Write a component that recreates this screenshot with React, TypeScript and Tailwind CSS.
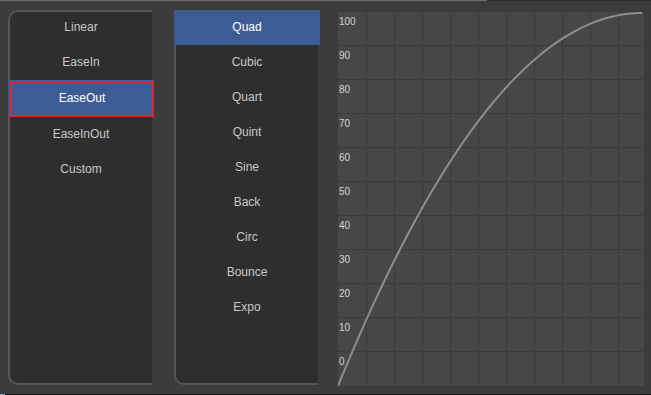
import React from "react";

const left = ["Linear", "EaseIn", "EaseOut", "EaseInOut", "Custom"];
const mid = ["Quad", "Cubic", "Quart", "Quint", "Sine", "Back", "Circ", "Bounce", "Expo"];
const labels = ["100", "90", "80", "70", "60", "50", "40", "30", "20", "10", "0"];

function Curve() {
  const W = 306;
  const H = 375;
  const pts: string[] = [];
  for (let i = 0; i <= 80; i++) {
    const t = i / 80;
    const v = 1 - (1 - t) * (1 - t);
    pts.push(`${(t * 304).toFixed(2)},${(375 - v * 373).toFixed(2)}`);
  }
  const vlines = [];
  for (let k = 1; k <= 10; k++) vlines.push(28 * k + 0.5);
  const hlines = [];
  for (let k = 0; k <= 10; k++) hlines.push(34 * k + 0.5);
  return (
    <svg width={W} height={H} className="absolute left-0 top-0">
      {vlines.map((x) => (
        <line key={"v" + x} x1={x} y1={0} x2={x} y2={H} stroke="#3b3b3b" strokeWidth={1} />
      ))}
      {hlines.map((y) => (
        <line key={"h" + y} x1={0} y1={y} x2={W} y2={y} stroke="#3b3b3b" strokeWidth={1} />
      ))}
      <polyline points={pts.join(" ")} fill="none" stroke="#8e8e8e" strokeWidth={2} />
    </svg>
  );
}

export default function App() {
  return (
    <div
      className="w-[651px] h-[395px] bg-[#3c3c3c] flex flex-col overflow-hidden"
      style={{ fontFamily: '"Liberation Sans", Arial, sans-serif' }}
    >
      <div className="flex h-[1px]">
        <div className="w-[487px] bg-[#6e6e6e]" />
        <div className="flex-1 bg-[#2a2a2a]" />
      </div>
      <div className="flex-1 flex pl-[8px] pt-[9px]">
        {/* left panel */}
        <div className="w-[144px] h-[375px] rounded-l-[10px] border-2 border-r-0 border-[#555555] bg-[#2e2e2e] flex flex-col">
          {left.map((l, i) =>
            l === "EaseOut" ? (
              <div key={l} className="-ml-[2px] w-[146px] h-[37px] shrink-0 bg-[#3d5c93] pl-[2px] pt-[1px] flex">
                <div className="flex-1 border-2 border-[#e02530] pb-[2px] flex items-center justify-center text-[12px] text-white">
                  {l}
                </div>
              </div>
            ) : (
              <div
                key={l}
                className={
                  i === 0
                    ? "-mt-[2px] h-[35px] shrink-0 pb-[2px] flex items-center justify-center text-[12px] text-[#c8c8c8]"
                    : "h-[35px] shrink-0 pb-[2px] flex items-center justify-center text-[12px] text-[#c8c8c8]"
                }
              >
                {l}
              </div>
            )
          )}
        </div>
        {/* middle panel */}
        <div className="ml-[22px] w-[144px] h-[375px] rounded-l-[10px] border-2 border-r-0 border-[#555555] bg-[#2e2e2e] flex flex-col">
          {mid.map((l, i) =>
            i === 0 ? (
              <div key={l} className="-ml-[2px] -mt-[2px] w-[146px] h-[35px] shrink-0 pb-[2px] bg-[#3d5c93] flex items-center justify-center text-[12px] text-white">
                {l}
              </div>
            ) : (
              <div key={l} className="h-[35px] shrink-0 pb-[2px] flex items-center justify-center text-[12px] text-[#c8c8c8]">
                {l}
              </div>
            )
          )}
        </div>
        {/* chart */}
        <div className="ml-[20px] mt-[1px] relative w-[306px] h-[375px] bg-[#474747]">
          <Curve />
          <div className="absolute left-0 top-0 flex flex-col">
            {labels.map((l) => (
              <div key={l} className="h-[34px] pt-[5px] pl-[1px] text-[10px] leading-[12px] text-[#d4d4d4]">
                {l}
              </div>
            ))}
          </div>
        </div>
      </div>
      <div className="flex h-[1px] bg-[#111111]">
        <div className="w-[5px] bg-[#8aa4d8]" />
      </div>
    </div>
  );
}
